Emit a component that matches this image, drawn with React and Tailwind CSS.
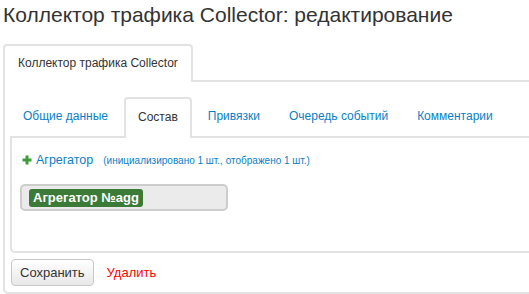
export default function App() {
  const tabs = ["Общие данные", "Состав", "Привязки", "Очередь событий", "Комментарии"];
  return (
    <div className="w-[529px] h-[294px] overflow-hidden bg-white text-[#333] font-['Liberation_Sans',Arial,sans-serif]">
      <h1 className="pl-[3px] h-[28px] text-[21px] leading-[30px] whitespace-nowrap">
        Коллектор трафика Collector: редактирование
      </h1>

      <div className="ml-[3px] mt-[16px] w-[600px]">
        <div className="flex border-b-2 border-[#e2e2e2] h-[38px]">
          <div className="h-[38px] -mb-[2px] px-[13px] border-2 border-b-0 border-[#e2e2e2] rounded-t-[4px] bg-white text-[12px] leading-[34px] text-[#333]">
            Коллектор трафика Collector
          </div>
        </div>

        <div className="border-2 border-t-0 border-[#e2e2e2] rounded-b-[5px] pl-[5px] pt-[15px] pb-[6px]">
          <div className="flex h-[41px] border-b-2 border-[#e2e2e2] text-[12px]">
            {tabs.map((t, i) =>
              i === 1 ? (
                <div
                  key={t}
                  className="h-[41px] -mb-[2px] mr-[3px] px-[12px] border-2 border-b-0 border-[#e2e2e2] rounded-t-[4px] bg-white text-[#333] leading-[37px]"
                >
                  {t}
                </div>
              ) : (
                <div key={t} className="h-[39px] mr-[3px] px-[13px] leading-[39px] text-[#0a7fc6]">
                  {t}
                </div>
              )
            )}
          </div>

          <div className="border-2 border-t-0 border-[#e2e2e2] rounded-b-[5px] h-[115px] pl-[8px] pt-[13px]">
            <div className="flex items-center h-[18px]">
              <svg width="10" height="10" viewBox="0 0 10 10" className="ml-[2px] mr-[4px]">
                <path d="M5 0.5v9M0.5 5h9" stroke="#3f9a3a" strokeWidth="3" />
              </svg>
              <span className="text-[12.5px] text-[#0a7fc6]">Агрегатор</span>
              <span className="ml-[10px] text-[10px] text-[#0a7fc6]">
                (инициализировано 1 шт., отображено 1 шт.)
              </span>
            </div>

            <div className="mt-[15px] w-[208px] h-[27px] border-2 border-[#cdcdcd] rounded-[5px] bg-[#ebebeb] flex items-center pl-[7px]">
              <span className="px-[4px] h-[18px] leading-[18px] rounded-[3px] bg-[#3b7a37] text-white text-[13px] font-bold">
                Агрегатор №agg
              </span>
            </div>
          </div>

          <div className="flex items-center mt-[6px] ml-[1px]">
            <button className="h-[27px] px-[8px] border border-[#c8c8c8] rounded-[4px] bg-gradient-to-b from-white to-[#e8e8e8] text-[13px] text-[#333]">
              Сохранить
            </button>
            <span className="ml-[13px] text-[13px] text-[#f00]">Удалить</span>
          </div>
        </div>
      </div>
    </div>
  );
}
